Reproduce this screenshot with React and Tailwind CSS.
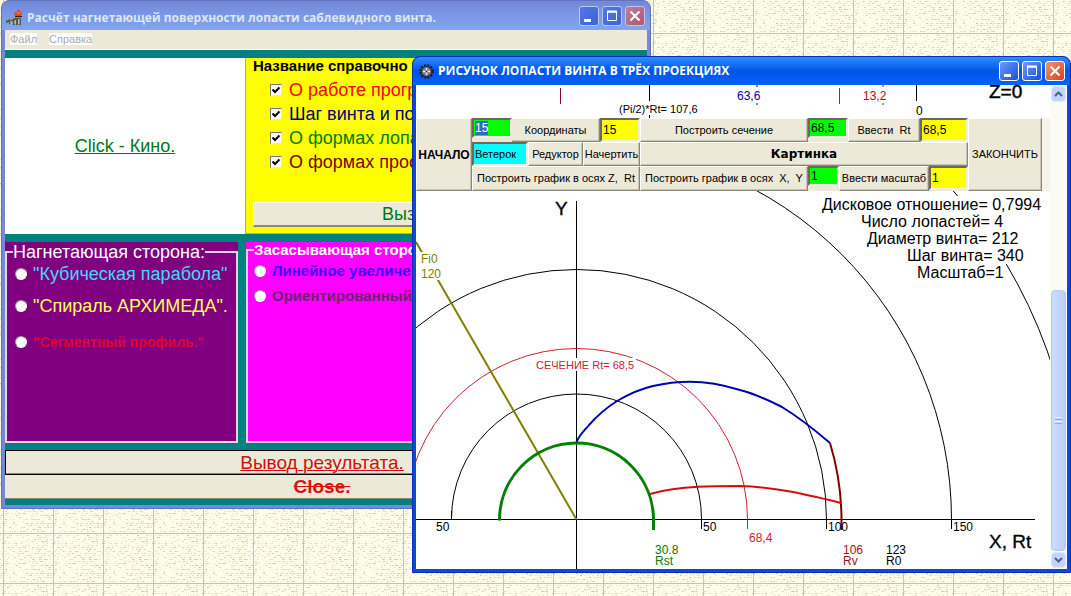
import React, { useEffect, useRef } from 'react'

const BTN = 'bg-[#ece9d8] border border-t-white border-l-white border-r-[#8a8775] border-b-[#8a8775] shadow-[inset_-1px_-1px_0_#c9c5b2] text-black whitespace-nowrap overflow-hidden'
const FIELD = 'min-w-0 rounded-none outline-none border-2 border-t-[#6b6959] border-l-[#6b6959] border-r-[#f1efe2] border-b-[#f1efe2] pl-px leading-3 self-start'

// repeatable specks for the paper wallpaper tile
const SPECKS = (() => {
  let seed = 7
  const next = () => {
    seed = (seed * 16807) % 2147483647
    return seed / 2147483647
  }
  return Array.from({ length: 330 }, () => ({
    x: Math.floor(next() * 50),
    y: Math.floor(next() * 25) * 2,
    w: next() > 0.6 ? 2 : 1,
    o: 0.2 + next() * 0.35,
  }))
})()

function Wallpaper() {
  return (
    <svg className="absolute inset-0 w-full h-full" aria-hidden="true">
      <defs>
        <pattern id="paper" x="3" y="33" width="50" height="50" patternUnits="userSpaceOnUse">
          <rect width="50" height="50" fill="#fefde9" />
          {SPECKS.map((s, i) => (
            <rect key={i} x={s.x} y={s.y} width={s.w} height="1" fill="#b8b098" opacity={s.o} />
          ))}
          <rect width="1" height="50" fill="#c4c1b8" />
          <rect width="50" height="1" fill="#c4c1b8" />
        </pattern>
      </defs>
      <rect width="100%" height="100%" fill="url(#paper)" />
    </svg>
  )
}

function CaptionButtons({ active }) {
  const blue = active
    ? 'w-5 h-5 rounded-[3px] border border-white bg-linear-to-br from-[#6f9cf5] to-[#1c49d8]'
    : 'w-5 h-5 rounded-[3px] border border-[#b9c9f5] bg-linear-to-br from-[#5577e2] to-[#3b62dc]'
  const red = active
    ? 'w-5 h-5 rounded-[3px] border border-white bg-linear-to-br from-[#ee9478] to-[#d63c12]'
    : 'w-5 h-5 rounded-[3px] border border-[#cdbfe0] bg-linear-to-br from-[#c07f92] to-[#a95a70]'
  return (
    <div className="flex gap-[3px]">
      <button aria-label="Minimize" className={blue}>
        <svg viewBox="0 0 18 18"><rect x="4" y="12" width="7" height="3" fill="#fff" /></svg>
      </button>
      <button aria-label="Maximize" className={blue}>
        <svg viewBox="0 0 18 18"><path d="M4.5 5v8.5h9V4M4 5h10" stroke="#fff" fill="none" /><path d="M4 4.5h10" stroke="#fff" strokeWidth="2" /></svg>
      </button>
      <button aria-label="Close" className={red}>
        <svg viewBox="0 0 18 18"><path d="M4.5 4.5l9 9M13.5 4.5l-9 9" stroke="#fff" strokeWidth="2" /></svg>
      </button>
    </div>
  )
}

function TempleIcon() {
  return (
    <svg width="17" height="17" viewBox="0 0 17 17" aria-hidden="true">
      <path d="M0 14v-2l4-2 4-2h7v8h-2v-6l-1 1v5h-2v-5l-1 1v4H7v-4l-2 1v2H3v-2z" fill="#55564c" />
      <path d="M4 11l5-3h6" stroke="#c9c49c" fill="none" />
      <path d="M5 12v3M9 11v4M13 10v5" stroke="#d8d3a8" />
      <path d="M9 7l-1-3 3-1 1-3 2 2 2 2-1 3z" fill="#e8431c" />
      <path d="M9 7.5h7" stroke="#3a1a10" />
      <path d="M11 5l1.500-2 1.500 2" stroke="#ffa04a" fill="none" />
    </svg>
  )
}

function GearIcon() {
  return (
    <svg width="15" height="15" viewBox="0 0 15 15" aria-hidden="true">
      <circle cx="7.5" cy="7.5" r="6.3" fill="none" stroke="#1b1b22" strokeWidth="2" strokeDasharray="2 1.3" />
      <circle cx="7.5" cy="7.5" r="5" fill="#77797c" stroke="#22242a" />
      <path d="M7.5 4v7M4 7.5h7" stroke="#f4f4f4" strokeWidth="1.4" />
      <circle cx="7.5" cy="7.5" r="1" fill="#222" />
    </svg>
  )
}

function Check({ color, children }) {
  return (
    <label className="flex items-center gap-[7px] h-6">
      <span className="relative w-3 h-3 shrink-0">
        <input type="checkbox" defaultChecked className="peer appearance-none block w-3 h-3 bg-white border border-t-[#777] border-l-[#777] border-r-[#e8e8c8] border-b-[#e8e8c8]" />
        <svg className="absolute inset-0 pointer-events-none invisible peer-checked:visible" viewBox="0 0 12 12">
          <path d="M2.5 5.5l2.5 2.5 4.5-4.5" stroke="#000" strokeWidth="2" fill="none" />
        </svg>
      </span>
      <span className={color}>{children}</span>
    </label>
  )
}

function Radio({ name, color, children }) {
  return (
    <label className="flex items-center gap-1.5 h-6">
      <input type="radio" name={name} className="appearance-none w-3 h-3 shrink-0 rounded-full bg-white border border-t-[#999] border-l-[#999] border-white checked:border-4 checked:border-black" />
      <span className={color}>{children}</span>
    </label>
  )
}

function MainWindow() {
  return (
    <section className="absolute left-px top-0 w-[650px] rounded-t-lg bg-[#7688d8] border border-[#6272c0] px-[3px] pb-[3px]">
      <header className="-mx-[3px] h-[29px] flex items-center justify-between rounded-t-lg pl-1 pr-[5px] bg-linear-to-b from-[#7287d6] via-[#7b98e6] to-[#83a4ee]">
        <div className="flex items-center gap-1 pt-1">
          <TempleIcon />
          <h1 className="font-['Open_Sans',sans-serif] font-bold text-xs leading-4 text-[#dbe5fb] whitespace-nowrap">Расчёт нагнетающей поверхности лопасти саблевидного винта.</h1>
        </div>
        <CaptionButtons />
      </header>
      <nav className="h-5 flex items-start gap-3 pt-[3px] pl-[5px] bg-[#ece9d8] border-b border-white text-[11px] leading-3 text-[#aaa]">
        <a href="#file" className="bg-white">Файл</a>
        <a href="#help" className="bg-white">Справка</a>
      </nav>
      <div className="bg-[#008080] pt-2 pb-1.5 pr-2">
        <div className="flex h-[176px]">
          <div className="w-60 bg-white flex items-center justify-center text-lg text-[#007a10]">
            <a href="#kino" className="underline decoration-1">Click - Кино.</a>
          </div>
          <div className="flex-1 min-w-0 bg-[#ffff00] border-l border-b border-[#b0b060] px-[7px] flex flex-col">
            <h2 className="text-[15px] leading-4 font-bold whitespace-nowrap">Название справочно</h2>
            <div className="pl-[17px] pt-1 text-lg leading-6 whitespace-nowrap">
              <Check color="text-[#ff0000]">О работе прогр</Check>
              <Check color="text-[#000080]">Шаг винта и по</Check>
              <Check color="text-[#008000]">О формах лопа</Check>
              <Check color="text-[#800000]">О формах прос</Check>
            </div>
            <button className="bg-[#ece9d8] border-t border-l border-white border-b-2 border-b-[#8a8775] mt-auto mb-[6px] h-[25px] text-lg leading-5 text-left pl-32 text-[#007a10]">Выз</button>
          </div>
        </div>
        <div className="flex gap-2 pt-2 h-[209px]">
          <div className="w-[233px] bg-[#800080] pt-0.5">
            <fieldset className="h-full border-2 border-[#e6d3e6] pl-2">
              <legend className="-ml-0.5 h-4 text-lg leading-4 text-white whitespace-nowrap">Нагнетающая сторона:</legend>
              <div className="whitespace-nowrap text-lg leading-6 pt-0.5">
                <Radio name="press" color="text-[#40d8ff]">"Кубическая парабола"</Radio>
                <div className="pt-2"><Radio name="press" color="text-[#ffff60]">"Спираль АРХИМЕДА".</Radio></div>
                <div className="pt-3"><Radio name="press" color="text-[#e00030] font-bold text-sm">"Сегментный профиль."</Radio></div>
              </div>
            </fieldset>
          </div>
          <div className="flex-1 min-w-0 bg-[#ff00ff]">
            <fieldset className="h-full border-2 border-[#e6d3e6] pl-1.5">
              <legend className="text-[15px] leading-4 font-bold text-white whitespace-nowrap">Засасывающая сторо</legend>
              <div className="whitespace-nowrap text-[15px] font-bold pt-px flex flex-col gap-px">
                <Radio name="suction" color="text-[#4000ff]">Линейное увеличе</Radio>
                <Radio name="suction" color="text-[#702070]">Ориентированный</Radio>
              </div>
            </fieldset>
          </div>
        </div>
        <div className="pt-[7px] flex flex-col">
          <button className="h-[25px] bg-[#ece9d8] border border-black shadow-[inset_0_-1px_0_#8a8775] text-[19px] leading-5 text-[#d01010] underline decoration-1">Вывод результата.</button>
          <button className="h-6 bg-[#ece9d8] border-b border-[#8a8775] text-[19px] leading-5 font-bold text-[#e01010] line-through">Close.</button>
        </div>
      </div>
    </section>
  )
}

function TopStrip() {
  return (
    <svg width="634" height="33" viewBox="416 85 634 33" className="block" role="img" aria-label="Z scale">
      <path d="M560.5 88v16" stroke="#900020" />
      <path d="M649.5 85v16M649.5 115v3M916.5 85v16" stroke="#000" />
      <path d="M839.5 88v16" stroke="#008000" />
      <path d="M757 85v2M757 103v2" stroke="#0000a0" />
      <path d="M883 85v2M883 103v2" stroke="#c00020" />
      <g fontSize="12">
        <text x="619" y="113" fontSize="11">(Pi/2)*Rt= 107,6</text>
        <text x="737" y="100" fill="#0000a0">63,6</text>
        <text x="863" y="100" fill="#c00020">13,2</text>
        <text x="916" y="115">0</text>
      </g>
      <text x="989" y="98" fontSize="19" stroke="#000" strokeWidth="0.5">Z=0</text>
    </svg>
  )
}

function Toolbar() {
  const first = useRef(null)

  useEffect(() => {
    first.current.focus()
    first.current.select()
  }, [])

  return (
    <form className="flex h-[73px] bg-[#f6f3ea] text-[11px] pr-2" onSubmit={(e) => e.preventDefault()}>
      <button className={`${BTN} w-14 font-bold text-xs`}>НАЧАЛО</button>
      <div className="flex-1 min-w-0 flex flex-col bg-[#ece9d8]">
        <div className="flex h-6">
          <input ref={first} aria-label="Координаты" defaultValue="15" className={`${FIELD} text-xs w-10 h-5 bg-[#00ff00] selection:bg-[#316ac5] selection:text-white`} />
          <button className={`${BTN} w-[88px] border-l-0`}>Координаты</button>
          <input aria-label="Шаг координат" defaultValue="15" className={`${FIELD} text-xs w-10 h-6 bg-[#ffff00]`} />
          <button className={`${BTN} flex-1`}>Построить сечение</button>
          <input aria-label="Сечение" defaultValue="68,5" className={`${FIELD} text-xs w-10 h-5 bg-[#00ff00]`} />
          <button className={`${BTN} w-[72px]`}>Ввести&nbsp; Rt</button>
          <input aria-label="Rt" defaultValue="68,5" className={`${FIELD} text-xs w-12 h-6 bg-[#ffff00]`} />
        </div>
        <div className="flex h-6">
          <input aria-label="Режим" defaultValue="Ветерок" className={`${FIELD} w-14 h-6 bg-[#00ffff]`} />
          <button className={`${BTN} w-[55px]`}>Редуктор</button>
          <button className={`${BTN} w-[57px]`}>Начертить</button>
          <button className={`${BTN} flex-1 font-bold text-xs font-['DejaVu_Sans',sans-serif]`}>Картинка</button>
        </div>
        <div className="flex h-[25px]">
          <button className={`${BTN} w-[168px]`}>Построить график в осях Z,&nbsp; Rt</button>
          <button className={`${BTN} flex-1`}>Построить график в осях&nbsp; X,&nbsp; Y</button>
          <input aria-label="Масштаб осей" defaultValue="1" className={`${FIELD} text-xs w-[31px] h-5 bg-[#00ff00]`} />
          <button className={`${BTN} w-[90px]`}>Ввести масштаб</button>
          <input aria-label="Масштаб" defaultValue="1" className={`${FIELD} text-xs w-[39px] h-6 bg-[#ffff00]`} />
        </div>
      </div>
      <button className={`${BTN} w-[74px]`}>ЗАКОНЧИТЬ</button>
    </form>
  )
}

function Chart() {
  return (
    <svg width="634" height="378" viewBox="416 191 634 378" className="block" role="img" aria-label="Проекция лопасти">
      <g fill="none" stroke="#000" strokeWidth="1">
        <path d="M576.5 201V569M416 519.5H1035" />
        <path d="M451.5 511V519A125 125 0 0 1 701.5 519V529" />
        <path d="M326.5 519.5A250 250 0 0 1 826.5 519.5V529" />
        <path d="M201.5 519.5A375 375 0 0 1 951.5 519.5V529" />
        <circle cx="576.5" cy="519.5" r="500" />
      </g>
      <path d="M405.5 519.5A171 171 0 0 1 747.5 519.5V529" fill="none" stroke="#d02030" />
      <path d="M416 242L576.5 519.5" stroke="#808000" strokeWidth="2" />
      <path d="M499.5 520.5A77 77 0 0 1 653.5 519.5V530" fill="none" stroke="#008000" strokeWidth="3" />
      <path d="M576.5 442C580 434 585 430 589 425C597 416 606 408 617 401C629 394 640 389 653 386C666 383 678 381.7 690 381.7C708 381.7 724 385 740 390C756 394 768 400 782 407C800 418 816 431 830 443" fill="none" stroke="#0000b0" strokeWidth="2" />
      <path d="M830 443A265 265 0 0 1 841.5 519.5V530" fill="none" stroke="#800000" strokeWidth="2" />
      <path d="M650 494C664 490 682 487.5 698 486.8C712 486 726 486 740 486C776 487 808 495 841 503" fill="none" stroke="#d01010" strokeWidth="2" />

      <g fill="#fff">
        <rect x="420" y="252" width="20" height="28" />
        <rect x="536" y="358" width="100" height="13" />
        <rect x="820" y="196" width="226" height="17" />
        <rect x="858" y="213" width="148" height="17" />
        <rect x="866" y="230" width="158" height="34" />
        <rect x="914" y="264" width="92" height="16" />
      </g>

      <text x="555" y="215" fontSize="19" stroke="#000" strokeWidth="0.3">Y</text>
      <text x="989" y="548" fontSize="19" stroke="#000" strokeWidth="0.3">X, Rt</text>
      <g fontSize="16">
        <text x="822" y="210">Дисковое отношение= 0,7994</text>
        <text x="861" y="227">Число лопастей= 4</text>
        <text x="867" y="244">Диаметр винта= 212</text>
        <text x="907" y="261">Шаг винта= 340</text>
        <text x="917" y="278">Масштаб=1</text>
      </g>
      <g fontSize="12">
        <text x="421" y="263" fill="#808000">Fi0</text>
        <text x="421" y="278" fill="#808000">120</text>
        <text x="536" y="369" fontSize="11" fill="#d02030">СЕЧЕНИЕ Rt= 68,5</text>
        <text x="436" y="531">50</text>
        <text x="703" y="531">50</text>
        <text x="828" y="531">100</text>
        <text x="953" y="531">150</text>
        <text x="749" y="542" fill="#d02030">68,4</text>
        <text x="655" y="554" fill="#008000">30.8</text>
        <text x="655" y="565" fill="#008000">Rst</text>
        <text x="843" y="554" fill="#a01020">106</text>
        <text x="843" y="565" fill="#a01020">Rv</text>
        <text x="886" y="554">123</text>
        <text x="886" y="565">R0</text>
      </g>
    </svg>
  )
}

function ScrollBar() {
  return (
    <div className="w-[17px] shrink-0 bg-[#fbfbf6] flex flex-col items-center py-px">
      <button aria-label="Scroll up" className="w-[15px] h-4 rounded-sm bg-[#c3d3fd] border border-[#dfe8ff]">
        <svg viewBox="0 0 13 14"><path d="M3 9l3.5-3.5L10 9" stroke="#4d6185" strokeWidth="2" fill="none" /></svg>
      </button>
      <div className="h-[188px]" />
      <div className="w-[15px] flex-1 rounded-sm border border-[#b4c8f6] bg-linear-to-r from-[#cdddfd] to-[#b9cdfb] flex flex-col items-center justify-center gap-px">
        <i className="block w-[7px] h-px bg-[#eef4fe]" />
        <i className="block w-[7px] h-px bg-[#8cb0f8]" />
        <i className="block w-[7px] h-px bg-[#eef4fe]" />
        <i className="block w-[7px] h-px bg-[#8cb0f8]" />
      </div>
      <button aria-label="Scroll down" className="mt-px w-[15px] h-4 rounded-sm bg-[#c3d3fd] border border-[#dfe8ff]">
        <svg viewBox="0 0 13 14"><path d="M3 5l3.5 3.5L10 5" stroke="#4d6185" strokeWidth="2" fill="none" /></svg>
      </button>
    </div>
  )
}

function DrawingWindow() {
  return (
    <section className="absolute left-[412px] right-0 top-14 rounded-t-lg bg-[#0f48d8] border border-[#0831b0] px-[3px] pb-[3px]">
      <header className="-mx-[3px] h-7 flex items-center justify-between rounded-t-lg pl-[6px] pr-[5px] bg-linear-to-b from-[#2f8cff] via-[#0055e8] to-[#0462f6]">
        <div className="flex items-center gap-1">
          <GearIcon />
          <h1 className="font-['Open_Sans',sans-serif] font-bold text-xs leading-4 text-white whitespace-nowrap">РИСУНОК ЛОПАСТИ ВИНТА В ТРЁХ ПРОЕКЦИЯХ</h1>
        </div>
        <CaptionButtons active />
      </header>
      <div className="flex bg-white">
        <div className="flex-1 min-w-0 overflow-hidden">
          <TopStrip />
          <Toolbar />
          <Chart />
        </div>
        <ScrollBar />
      </div>
    </section>
  )
}

export default function App() {
  return (
    <main className="relative min-h-screen overflow-hidden font-['Liberation_Sans',sans-serif] text-black">
      <Wallpaper />
      <MainWindow />
      <DrawingWindow />
    </main>
  )
}
